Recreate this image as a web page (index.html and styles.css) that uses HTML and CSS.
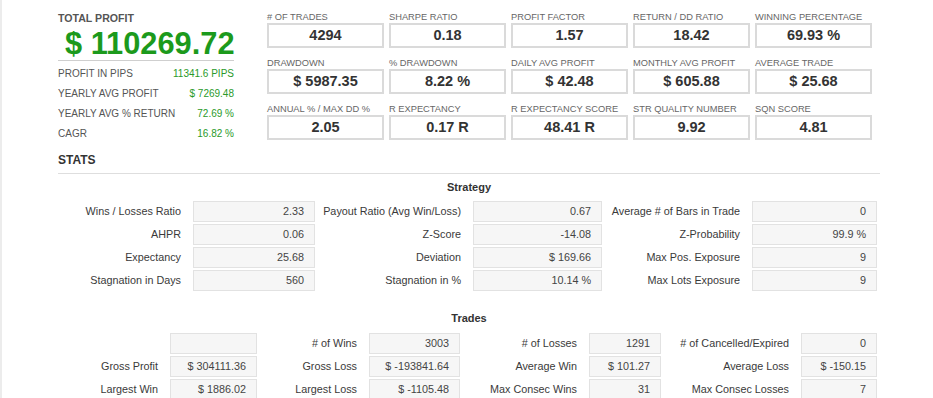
FILE: index.html
```html
<!DOCTYPE html>
<html>
<head>
<meta charset="utf-8">
<link rel="stylesheet" href="styles.css">
</head>
<body>
<div class="page">
  <div class="top">
    <div class="summary">
      <div class="sum-title">TOTAL PROFIT</div>
      <div class="sum-big">$ 110269.72</div>
      <div class="sum-rows">
        <div class="sum-row"><span>PROFIT IN PIPS</span><span class="green">11341.6 PIPS</span></div>
        <div class="sum-row"><span>YEARLY AVG PROFIT</span><span class="green">$ 7269.48</span></div>
        <div class="sum-row"><span>YEARLY AVG % RETURN</span><span class="green">72.69 %</span></div>
        <div class="sum-row"><span>CAGR</span><span class="green">16.82 %</span></div>
      </div>
    </div>
    <div class="metrics">
      <div class="metric"><div class="m-label"># OF TRADES</div><div class="m-box">4294</div></div>
      <div class="metric"><div class="m-label">SHARPE RATIO</div><div class="m-box">0.18</div></div>
      <div class="metric"><div class="m-label">PROFIT FACTOR</div><div class="m-box">1.57</div></div>
      <div class="metric"><div class="m-label">RETURN / DD RATIO</div><div class="m-box">18.42</div></div>
      <div class="metric"><div class="m-label">WINNING PERCENTAGE</div><div class="m-box">69.93 %</div></div>
      <div class="metric"><div class="m-label">DRAWDOWN</div><div class="m-box">$ 5987.35</div></div>
      <div class="metric"><div class="m-label">% DRAWDOWN</div><div class="m-box">8.22 %</div></div>
      <div class="metric"><div class="m-label">DAILY AVG PROFIT</div><div class="m-box">$ 42.48</div></div>
      <div class="metric"><div class="m-label">MONTHLY AVG PROFIT</div><div class="m-box">$ 605.88</div></div>
      <div class="metric"><div class="m-label">AVERAGE TRADE</div><div class="m-box">$ 25.68</div></div>
      <div class="metric"><div class="m-label">ANNUAL % / MAX DD %</div><div class="m-box">2.05</div></div>
      <div class="metric"><div class="m-label">R EXPECTANCY</div><div class="m-box">0.17 R</div></div>
      <div class="metric"><div class="m-label">R EXPECTANCY SCORE</div><div class="m-box">48.41 R</div></div>
      <div class="metric"><div class="m-label">STR QUALITY NUMBER</div><div class="m-box">9.92</div></div>
      <div class="metric"><div class="m-label">SQN SCORE</div><div class="m-box">4.81</div></div>
    </div>
  </div>

  <div class="stats-title">STATS</div>

  <div class="sec-title">Strategy</div>
  <div class="grid strat">
    <div class="lbl">Wins / Losses Ratio</div><div class="val">2.33</div>
    <div class="lbl">Payout Ratio (Avg Win/Loss)</div><div class="val">0.67</div>
    <div class="lbl">Average # of Bars in Trade</div><div class="val">0</div>

    <div class="lbl">AHPR</div><div class="val">0.06</div>
    <div class="lbl">Z-Score</div><div class="val">-14.08</div>
    <div class="lbl">Z-Probability</div><div class="val">99.9 %</div>

    <div class="lbl">Expectancy</div><div class="val">25.68</div>
    <div class="lbl">Deviation</div><div class="val">$ 169.66</div>
    <div class="lbl">Max Pos. Exposure</div><div class="val">9</div>

    <div class="lbl">Stagnation in Days</div><div class="val">560</div>
    <div class="lbl">Stagnation in %</div><div class="val">10.14 %</div>
    <div class="lbl">Max Lots Exposure</div><div class="val">9</div>
  </div>

  <div class="sec-title trades-title">Trades</div>
  <div class="grid trades">
    <div class="lbl"></div><div class="val"></div>
    <div class="lbl"># of Wins</div><div class="val">3003</div>
    <div class="lbl"># of Losses</div><div class="val">1291</div>
    <div class="lbl"># of Cancelled/Expired</div><div class="val">0</div>

    <div class="lbl">Gross Profit</div><div class="val">$ 304111.36</div>
    <div class="lbl">Gross Loss</div><div class="val">$ -193841.64</div>
    <div class="lbl">Average Win</div><div class="val">$ 101.27</div>
    <div class="lbl">Average Loss</div><div class="val">$ -150.15</div>

    <div class="lbl">Largest Win</div><div class="val">$ 1886.02</div>
    <div class="lbl">Largest Loss</div><div class="val">$ -1105.48</div>
    <div class="lbl">Max Consec Wins</div><div class="val">31</div>
    <div class="lbl">Max Consec Losses</div><div class="val">7</div>
  </div>
</div>
</body>
</html>
```

FILE: styles.css
```css
html, body {
  margin: 0;
  padding: 0;
  background: #fff;
}
body {
  border-left: 2px solid #ececec;
  min-height: 100vh;
  box-sizing: border-box;
  font-family: "Liberation Sans", Arial, sans-serif;
  color: #333;
  overflow: hidden;
}
.page {
  margin-left: 56px;
  width: 822px;
}
.top {
  display: flex;
  padding-top: 12px;
}
.summary {
  width: 176px;
}
.sum-title {
  font-size: 10.6px;
  font-weight: bold;
  line-height: 12px;
  color: #555;
}
.sum-big {
  margin-top: 5px;
  font-size: 30.8px;
  font-weight: bold;
  line-height: 30px;
  color: #1c9a1c;
  padding-left: 7px;
  white-space: nowrap;
}
.sum-rows {
  margin-top: 1px;
  border-top: 1px solid #cfcfcf;
  padding-top: 3px;
}
.sum-row {
  display: flex;
  justify-content: space-between;
  font-size: 10px;
  line-height: 20px;
  color: #555;
  white-space: nowrap;
}
.green {
  color: #2a9a2a;
}
.metrics {
  margin-left: 33px;
  display: grid;
  grid-template-columns: repeat(5, 117px);
  column-gap: 5px;
  row-gap: 10px;
  align-content: start;
}
.m-label {
  font-size: 9.3px;
  line-height: 11px;
  color: #666;
  white-space: nowrap;
}
.m-box {
  height: 25px;
  box-sizing: border-box;
  border: 2px solid #dadada;
  text-align: center;
  font-size: 14.5px;
  font-weight: bold;
  line-height: 21px;
  color: #333;
}
.stats-title {
  margin-top: 9px;
  font-size: 12px;
  font-weight: bold;
  line-height: 14px;
  padding-bottom: 6px;
  border-bottom: 1px solid #dedede;
  color: #333;
}
.sec-title {
  margin-top: 7px;
  margin-bottom: 7px;
  text-align: center;
  font-size: 11px;
  font-weight: bold;
  line-height: 13px;
  color: #333;
}
.trades-title {
  margin-top: 21px;
  margin-bottom: 8px;
}
.grid {
  display: grid;
  grid-auto-rows: 21px;
  row-gap: 2px;
}
.strat {
  grid-template-columns: 135px 122px 158px 129px 150px 125px;
}
.trades {
  grid-template-columns: 112px 87px 112px 91px 129px 72px 140px 76px;
}
.lbl {
  text-align: right;
  padding-right: 12px;
  font-size: 10.8px;
  line-height: 21px;
  color: #3a3a3a;
  white-space: nowrap;
}
.val {
  box-sizing: border-box;
  background: #f6f6f6;
  border: 1px solid #e2e2e2;
  text-align: right;
  padding-right: 10px;
  font-size: 10.8px;
  line-height: 19px;
  color: #444;
  white-space: nowrap;
}
```
